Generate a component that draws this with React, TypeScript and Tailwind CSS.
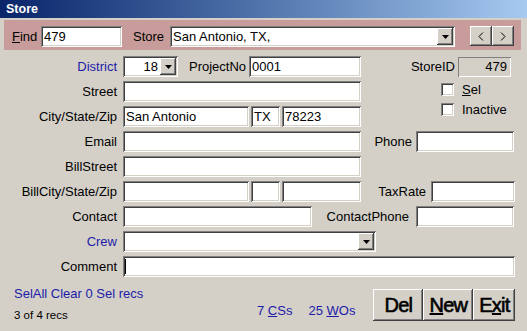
import React from "react";

const sunken =
  "bg-white shadow-[inset_1px_1px_0_#808080,inset_-1px_-1px_0_#ffffff,inset_2px_2px_0_#404040,inset_-2px_-2px_0_#d4d0c8]";
const sunkenGray =
  "bg-[#d4d0c8] shadow-[inset_1px_1px_0_#808080,inset_-1px_-1px_0_#ffffff]";
const raised =
  "bg-[#d4d0c8] shadow-[inset_-1px_-1px_0_#404040,inset_1px_1px_0_#ffffff,inset_-2px_-2px_0_#808080,inset_2px_2px_0_#d4d0c8]";

function Field({ w, text, caret }: { w: string; text?: string; caret?: boolean }) {
  return (
    <div className={`${sunken} ${w} h-[21px] shrink-0 px-[3px] text-[13px] leading-[21px] text-black whitespace-nowrap overflow-hidden flex items-center`}>
      {caret ? <div className="w-[1px] h-[15px] bg-black ml-[-1px]" /> : null}
      {text}
    </div>
  );
}

function Arrow() {
  return (
    <div className={`${raised} w-[16px] h-[17px] shrink-0 flex items-center justify-center`}>
      <svg width="7" height="4" viewBox="0 0 7 4">
        <path d="M0 0H7L3.5 4Z" fill="#000" />
      </svg>
    </div>
  );
}

function Combo({ w, text, right }: { w: string; text?: string; right?: boolean }) {
  return (
    <div className={`${sunken} ${w} h-[21px] shrink-0 flex items-center pl-[3px] pr-[2px]`}>
      <div className={`flex-1 text-[13px] leading-[17px] text-black whitespace-nowrap overflow-hidden ${right ? "text-right pr-[2px]" : ""}`}>
        {text}
      </div>
      <Arrow />
    </div>
  );
}

function Label({ children, blue, w }: { children: React.ReactNode; blue?: boolean; w: string }) {
  return (
    <div className={`${w} shrink-0 text-right text-[13px] leading-[21px] whitespace-nowrap ${blue ? "text-[#1c1ca8]" : "text-black"}`}>
      {children}
    </div>
  );
}

function Check({ children }: { children: React.ReactNode }) {
  return (
    <div className="flex items-center h-[13px]">
      <div className={`${sunken} w-[13px] h-[13px] shrink-0`} />
      <div className="ml-[8px] text-[13px] leading-[13px] text-black">{children}</div>
    </div>
  );
}

function Btn({ w, children }: { w: string; children: React.ReactNode }) {
  return (
    <div className={`${raised} ${w} h-[32px] shrink-0 flex items-center justify-center text-[20px] font-normal tracking-[-0.8px] [-webkit-text-stroke:0.6px_#000] text-black leading-none`}>
      {children}
    </div>
  );
}

export default function App() {
  return (
    <div className="w-[527px] h-[331px] bg-[#d4d0c8] flex flex-col font-['Liberation_Sans',Arial,sans-serif] overflow-hidden">
      {/* title bar */}
      <div className="h-[18px] shrink-0 bg-gradient-to-r from-[#0a246a] to-[#a6caf0] flex items-center pl-[6px]">
        <span className="text-white font-bold text-[12.5px] leading-none">Store</span>
      </div>

      {/* client */}
      <div className="mt-[2px] ml-[4px] mr-[6px] mb-[5px] flex-1 flex flex-col">
        {/* header band */}
        <div className="h-[30px] shrink-0 bg-[#c89c9a] flex items-start pt-[6px]">
          <div className="ml-[8px] w-[29px] text-[13px] leading-[21px] text-black">
            <u>F</u>ind
          </div>
          <Field w="w-[81px]" text="479" />
          <div className="ml-[11px] w-[37px] text-[13px] leading-[21px] text-black">Store</div>
          <Combo w="w-[285px]" text="San Antonio, TX," />
          <div className="ml-[15px] flex">
            <div className={`${raised} w-[22px] h-[20px] flex items-center justify-center`}>
              <svg width="6" height="9" viewBox="0 0 6 9">
                <path d="M5 0.5L1 4.5L5 8.5" fill="none" stroke="#000" strokeWidth="1" />
              </svg>
            </div>
            <div className={`${raised} w-[22px] h-[20px] flex items-center justify-center`}>
              <svg width="6" height="9" viewBox="0 0 6 9">
                <path d="M1 0.5L5 4.5L1 8.5" fill="none" stroke="#000" strokeWidth="1" />
              </svg>
            </div>
          </div>
        </div>

        {/* body */}
        <div className="flex-1 flex flex-col pt-[6px] gap-[4px]">
          {/* District row */}
          <div className="flex h-[21px] items-center">
            <Label w="w-[113px]" blue>District</Label>
            <div className="ml-[6px]">
              <Combo w="w-[55px]" text="18" right />
            </div>
            <div className="ml-[11px] w-[56px] text-[13px] leading-[21px] text-black">ProjectNo</div>
            <div className="ml-[4px]">
              <Field w="w-[112px]" text="0001" />
            </div>
            <Label w="w-[94px]">StoreID</Label>
            <div className={`${sunkenGray} ml-[3px] w-[53px] h-[20px] text-right pr-[4px] text-[13px] leading-[20px] text-black`}>479</div>
          </div>

          {/* Street + City with checkboxes */}
          <div className="flex">
            <div className="flex flex-col gap-[4px]">
              <div className="flex h-[21px] items-center">
                <Label w="w-[113px]">Street</Label>
                <div className="ml-[6px]">
                  <Field w="w-[238px]" />
                </div>
              </div>
              <div className="flex h-[21px] items-center">
                <Label w="w-[113px]">City/State/Zip</Label>
                <div className="ml-[6px] flex gap-[2px]">
                  <Field w="w-[126px]" text="San Antonio" />
                  <Field w="w-[29px]" text="TX" />
                  <Field w="w-[79px]" text="78223" />
                </div>
              </div>
            </div>
            <div className="ml-[80px] pt-[2px] flex flex-col gap-[7px]">
              <Check>
                <u>S</u>el
              </Check>
              <Check>Inactive</Check>
            </div>
          </div>

          {/* Email */}
          <div className="flex h-[21px] items-center">
            <Label w="w-[113px]">Email</Label>
            <div className="ml-[6px]">
              <Field w="w-[238px]" />
            </div>
            <Label w="w-[51px]">Phone</Label>
            <div className="ml-[4px]">
              <Field w="w-[98px]" />
            </div>
          </div>

          {/* BillStreet */}
          <div className="flex h-[21px] items-center">
            <Label w="w-[113px]">BillStreet</Label>
            <div className="ml-[6px]">
              <Field w="w-[238px]" />
            </div>
          </div>

          {/* BillCity */}
          <div className="flex h-[21px] items-center">
            <Label w="w-[113px]">BillCity/State/Zip</Label>
            <div className="ml-[6px] flex gap-[2px]">
              <Field w="w-[126px]" />
              <Field w="w-[29px]" />
              <Field w="w-[79px]" />
            </div>
            <Label w="w-[65px]">TaxRate</Label>
            <div className="ml-[5px]">
              <Field w="w-[84px]" />
            </div>
          </div>

          {/* Contact */}
          <div className="flex h-[21px] items-center">
            <Label w="w-[113px]">Contact</Label>
            <div className="ml-[6px]">
              <Field w="w-[189px]" />
            </div>
            <Label w="w-[97px]">ContactPhone</Label>
            <div className="ml-[7px]">
              <Field w="w-[98px]" />
            </div>
          </div>

          {/* Crew */}
          <div className="flex h-[21px] items-center">
            <Label w="w-[113px]" blue>Crew</Label>
            <div className="ml-[6px]">
              <Combo w="w-[253px]" />
            </div>
          </div>

          {/* Comment */}
          <div className="flex h-[21px] items-center">
            <Label w="w-[113px]">Comment</Label>
            <div className="ml-[6px]">
              <Field w="w-[392px]" caret />
            </div>
          </div>

          {/* bottom */}
          <div className="flex flex-1">
            <div className="w-[253px] shrink-0 flex flex-col pl-[10px]">
              <div className="mt-[5px] text-[13px] leading-[15px] text-[#1c1ca8] whitespace-nowrap">
                SelAll Clear 0 Sel recs
              </div>
              <div className="mt-[7px] text-[11.5px] leading-[14px] text-black whitespace-nowrap">3 of 4 recs</div>
            </div>
            <div className="mt-[23px] flex h-[14px] text-[13px] leading-[14px] text-[#1c1ca8] whitespace-nowrap">
              <span>
                7 <u>C</u>Ss
              </span>
              <span className="ml-[16px]">
                25 <u>W</u>Os
              </span>
            </div>
            <div className="ml-[18px] mt-[8px] flex">
              <Btn w="w-[50px]">Del</Btn>
              <Btn w="w-[50px]">
                <span>
                  <u>N</u>ew
                </span>
              </Btn>
              <Btn w="w-[42px]">
                <span>
                  E<u>x</u>it
                </span>
              </Btn>
            </div>
          </div>
        </div>
      </div>
    </div>
  );
}
